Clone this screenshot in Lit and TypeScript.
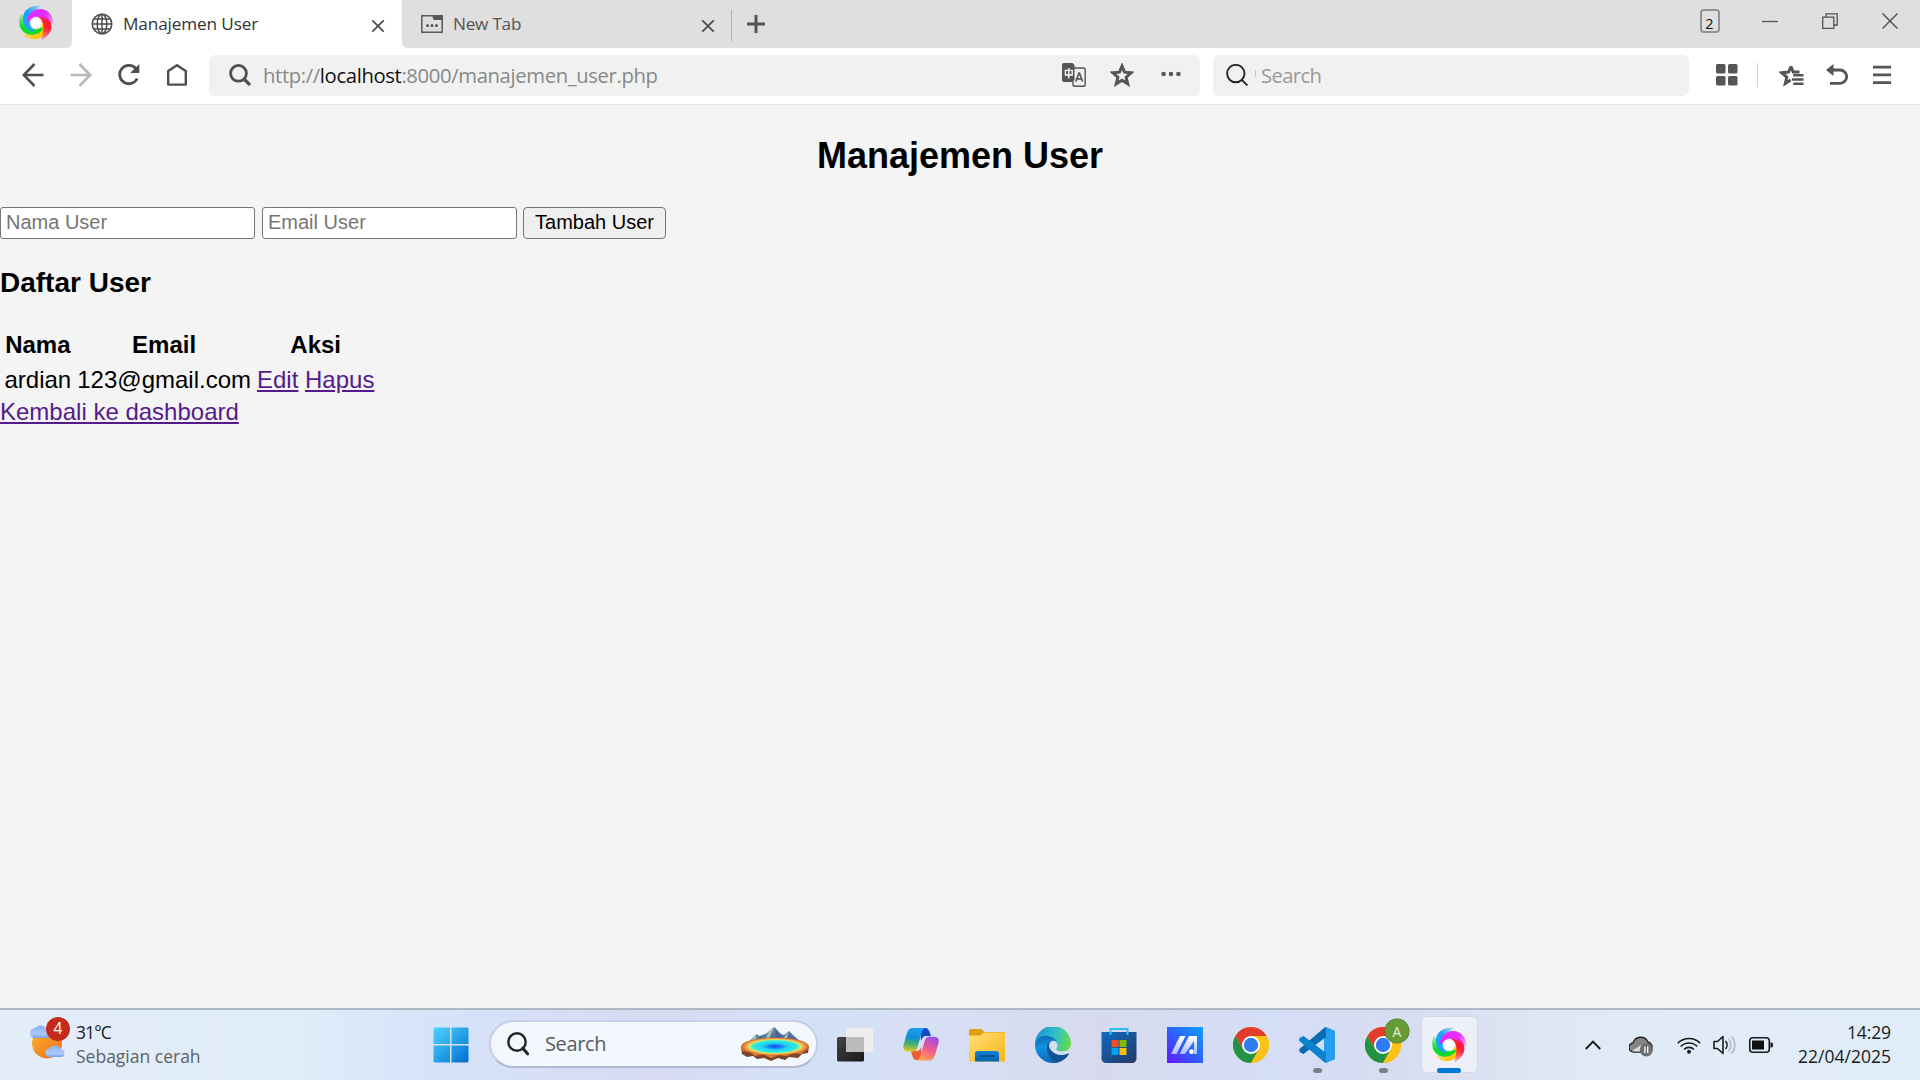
import { LitElement, html, css, svg } from "lit";
import { customElement } from "lit/decorators.js";

const BLADES = [
  { color: "#ffc800", turn: 138 },
  { color: "#0fdc2c", turn: 208 },
  { color: "#1fa2fa", turn: 280 },
  { color: "#ff1a34", turn: 68 },
  { color: "#e52cff", turn: 0 },
];

const swirl = (id: string) => html`<svg width="36" height="36" viewBox="-53 -53 106 106">
  <defs>
    <filter id="b${id}" x="-20%" y="-20%" width="140%" height="140%"><feGaussianBlur stdDeviation="1.5" /></filter>
    <radialGradient id="w${id}"><stop offset=".55" stop-color="#fff" /><stop offset="1" stop-color="#fff" stop-opacity="0" /></radialGradient>
    ${BLADES.map((b, i) => svg`<linearGradient id="g${id}${i}" x1=".1" y1=".2" x2="1" y2=".9">
      <stop offset=".45" stop-color=${b.color} /><stop offset="1" stop-color=${b.color} stop-opacity=".35" /></linearGradient>`)}
  </defs>
  <circle r="25" fill="none" stroke="#f0a0a0" stroke-width="6" />
  <g filter="url(#b${id})">
    ${BLADES.map((b, i) => svg`<path transform="rotate(${b.turn})" fill="url(#g${id}${i})"
      d="M-27 -4C-25 -26 -8 -40 13 -41C34 -41 51 -22 52 4C46 1 40 -5 33 -9C26 -13 20 -16 12 -18C2 -20 -12 -17 -18 -6Z" />`)}
  </g>
  <circle r="21" fill="url(#w${id})" />
</svg>`;

const closeGlyph = html`<svg width="14" height="14" viewBox="0 0 14 14"><path d="M1.3 1.3L12.7 12.7M12.7 1.3L1.3 12.7" stroke="#4c4c4c" stroke-width="1.8" /></svg>`;

const chrome = html`<svg width="36" height="36" viewBox="0 0 36 36">
  <circle cx="18" cy="18" r="18" fill="#fbc116" />
  <path d="M2.4 9A18 18 0 0 1 33.6 9H18L10.2 22.5Z" fill="#e33b2e" />
  <path d="M2.4 9A18 18 0 0 0 18 36L25.8 22.5H10.2Z" fill="#229342" />
  <path d="M33.6 9A18 18 0 0 1 18 36L25.8 22.5L18 9Z" fill="#fbc116" />
  <circle cx="18" cy="18" r="9" fill="#fff" /><circle cx="18" cy="18" r="7.2" fill="#2f7cee" />
</svg>`;

@customElement("browser-tabs")
class BrowserTabs extends LitElement {
  static styles = css`
    :host { display: flex; height: 48px; background: #dfdfdf; font: 17.2px "Open Sans", "Noto Sans", sans-serif; color: #444; }
    svg { display: block; flex: none; }
    .logo { width: 72px; padding: 5px 0 0 18px; box-sizing: border-box; border-bottom-right-radius: 6px; background: #dfdfdf; }
    .under { background: #fff; display: flex; }
    .tab { box-sizing: border-box; width: 330px; height: 48px; display: flex; align-items: center; padding: 0 17px 0 19px; }
    .active { background: #fff; border-radius: 7px 7px 0 0; }
    .idle { width: 329px; border-bottom-left-radius: 6px; background: #dfdfdf; padding-right: 16px; }
    .label { flex: 1; line-height: 48px; height: 48px; padding-left: 10px; }
    .first { color: #333; letter-spacing: -0.14px; }
    .second { color: #555; letter-spacing: -0.25px; }
    .x { padding-top: 3px; }
    .sep { width: 1px; height: 31px; margin-top: 10px; background: #b0b0b0; }
    .plus { margin: 15px 0 0 15px; }
    .win { margin-left: auto; display: flex; align-items: flex-start; }
    .count { box-sizing: border-box; width: 20px; height: 24px; margin: 9px 42.5px 0 0; border: 2px solid #929292; border-radius: 4px; text-align: center; font-size: 14.5px; line-height: 26px; color: #111; }
    .min { margin: 13px 44px 0 0; }
    .max { margin: 13px 44px 0 0; }
    .cls { margin: 13px 22px 0 0; }
  `;
  render() {
    return html`
      <div class="under">
        <div class="logo">${swirl("t")}</div>
        <div class="tab active">
          <svg width="22" height="22" viewBox="0 0 22 22" fill="none" stroke="#4c4c4c" stroke-width="1.5"><circle cx="11" cy="11" r="9.8" /><ellipse cx="11" cy="11" rx="4.8" ry="9.8" /><path d="M11 1V21M1 11H21M2.7 6H19.3M2.7 16H19.3" /></svg>
          <div class="label first">Manajemen User</div><div class="x">${closeGlyph}</div>
        </div>
        <div class="tab idle">
          <svg width="22" height="18" viewBox="0 0 22 18"><path d="M.8 .8H21.2V17.2H.8Z" fill="none" stroke="#585858" stroke-width="1.5" /><path d="M11 0H22V5H12.5Z" fill="#585858" /><g fill="#585858"><circle cx="6.5" cy="10.5" r="1.5" /><circle cx="11" cy="10.5" r="1.5" /><circle cx="15.5" cy="10.5" r="1.5" /></g></svg>
          <div class="label second">New Tab</div><div class="x">${closeGlyph}</div>
        </div>
      </div>
      <div class="sep"></div>
      <svg class="plus" width="18" height="18" viewBox="0 0 18 18"><path d="M9 0V18M0 9H18" stroke="#555" stroke-width="3" /></svg>
      <div class="win">
        <div class="count">2</div>
        <svg class="min" width="16" height="16" viewBox="0 0 16 16"><path d="M0 8.5H16" stroke="#555" stroke-width="1.3" /></svg>
        <svg class="max" width="16" height="16" viewBox="0 0 16 16" fill="none" stroke="#555" stroke-width="1.3"><path d="M.7 4.2H11.8V15.3H.7ZM4 4V.8H15.2V12H12" /></svg>
        <svg class="cls" width="16" height="16" viewBox="0 0 16 16"><path d="M.5 .5L15.5 15.5M15.5 .5L.5 15.5" stroke="#555" stroke-width="1.5" /></svg>
      </div>`;
  }
}

@customElement("browser-toolbar")
class BrowserToolbar extends LitElement {
  static styles = css`
    :host { display: flex; align-items: center; box-sizing: border-box; height: 57px; padding: 0 28px 2px 22px; background: #fff; border-bottom: 1px solid #e4e4e4; font: 20.3px "Open Sans", "Noto Sans", sans-serif; }
    svg { display: block; flex: none; }
    .nav { display: flex; flex: none; gap: 26px; width: 187px; }
    .box { display: flex; flex: none; align-items: center; box-sizing: border-box; height: 41px; background: #f1f1f1; border-radius: 6px; }
    .url { width: 991px; padding: 0 19px 0 20px; }
    .address { flex: 1; padding-left: 12px; color: #888; line-height: 39px; white-space: nowrap; letter-spacing: -0.38px; }
    .host { color: #111; }
    .star { margin: 0 27px 0 24px; }
    .dots { margin-bottom: 2px; }
    .find { width: 476px; margin-left: 13px; padding-left: 13px; color: #999; }
    .caret { width: 1px; height: 7px; margin: 0 5px 3px 7px; background: #c8c8c8; }
    .word { line-height: 39px; letter-spacing: -0.65px; }
    .apps { margin-left: 27px; }
    .sep { width: 1px; height: 24px; margin: 0 21px 0 19px; background: #d0d0d0; }
    .undo { margin: 0 25px 0 22px; }
  `;
  render() {
    return html`
      <div class="nav">
        <svg width="22" height="24" viewBox="0 0 22 24" fill="none" stroke="#4f4f4f" stroke-width="2.6"><path d="M12.5 1L1.8 12L12.5 23M2 12H21.5" /></svg>
        <svg width="22" height="24" viewBox="0 0 22 24" fill="none" stroke="#b9b9b9" stroke-width="2.6"><path d="M9.5 1L20.2 12L9.5 23M20 12H.5" /></svg>
        <svg width="22" height="24" viewBox="0 0 22 24" fill="none" stroke="#4f4f4f" stroke-width="2.8"><path d="M17.6 5.2A9.2 9.2 0 1 0 19.2 15.5" /><path d="M21.3 1V10H12.2Z" fill="#4f4f4f" stroke="none" /></svg>
        <svg width="22" height="24" viewBox="0 0 22 24" fill="none" stroke="#4f4f4f" stroke-width="2.4" stroke-linejoin="round"><path d="M2.2 8L11 2.2L19.8 8V21.6H2.2Z" /></svg>
      </div>
      <div class="box url">
        <svg width="22" height="22" viewBox="0 0 22 22" fill="none" stroke="#4f4f4f" stroke-width="2.8"><circle cx="9.5" cy="9.3" r="7.9" /><path d="M15 15L21 21" stroke-width="3.2" /></svg>
        <div class="address">http://<span class="host">localhost</span>:8000/manajemen_user.php</div>
        <svg width="24" height="24" viewBox="0 0 24 24"><rect x="11" y="5" width="12.2" height="18.2" rx="1.8" fill="#f1f1f1" stroke="#555" stroke-width="1.4" /><path d="M13.8 18.5L17 10H17.4L20.6 18.5M14.8 15.8H19.6" fill="none" stroke="#555" stroke-width="1.7" /><path d="M2 0H10.5L12.5 2V17L9.6 19H2A2 2 0 0 1 0 17V2A2 2 0 0 1 2 0Z" fill="#555" /><path d="M3.4 7.3H10.2V12H3.4ZM6.8 5V15.5" fill="none" stroke="#fff" stroke-width="1.3" /></svg>
        <svg class="star" width="24" height="24" viewBox="0 0 24 24"><path d="M12 3.2L14.5 9.2L21.2 9.8L16.1 14.2L17.7 20.8L12 17.2L6.3 20.8L7.9 14.2L2.8 9.8L9.5 9.2Z" fill="none" stroke="#555" stroke-width="3" /></svg>
        <svg class="dots" width="20" height="6" viewBox="0 0 20 6" fill="#555"><circle cx="2.6" cy="3" r="2.3" /><circle cx="10" cy="3" r="2.3" /><circle cx="17.4" cy="3" r="2.3" /></svg>
      </div>
      <div class="box find">
        <svg width="22" height="22" viewBox="0 0 22 22" fill="none" stroke="#252525" stroke-width="1.9"><circle cx="9.8" cy="9.6" r="8.7" /><path d="M15.8 15.8L21.4 21.4" /></svg>
        <div class="caret"></div><div class="word">Search</div>
      </div>
      <svg class="apps" width="22" height="22" viewBox="0 0 22 22" fill="#555"><rect width="9.5" height="9.5" rx="1.5" /><rect x="12" width="9.5" height="9.5" rx="1.5" /><rect y="12" width="9.5" height="9.5" rx="1.5" /><rect x="12" y="12" width="9.5" height="9.5" rx="1.5" /></svg>
      <div class="sep"></div>
      <svg width="25" height="24" viewBox="0 0 25 24"><path d="M12 3.5L14.2 9H20.5M12 3.5L9.6 9L2.8 9.8L7.8 14L6.3 20.5L11.6 17" fill="none" stroke="#555" stroke-width="3" /><path d="M14.2 12.3H24.5M13 16.5H24.5M14.2 20.7H24.5" stroke="#555" stroke-width="2.4" /></svg>
      <svg class="undo" width="22" height="24" viewBox="0 0 22 24"><path d="M0 7L7.5 1V13Z" fill="#555" /><path d="M5 7H14A6.3 6.3 0 0 1 14 20.3H4" fill="none" stroke="#555" stroke-width="2.8" /></svg>
      <svg width="18" height="20" viewBox="0 0 18 20"><path d="M0 2.2H18M0 9.9H18M0 17.6H18" stroke="#555" stroke-width="2.8" /></svg>`;
  }
}

@customElement("user-page")
class UserPage extends LitElement {
  static styles = css`
    :host { display: block; flex: 1; background: #f4f4f4; color: #000; font: 24px/27px "Liberation Sans", Arial, sans-serif; overflow: hidden; }
    h2 { font-size: 36px; line-height: 41px; text-align: center; margin: 30px 0; }
    h3 { font-size: 28px; line-height: 32px; margin: 28px 0 27px; }
    .form { display: flex; padding-top: 1px; }
    .field { box-sizing: border-box; width: 255px; height: 32px; margin: 0 7px 0 0; padding: 1px 5px 3px; border: 1px solid #767676; border-radius: 3px; background: #fff; font: 20px "Liberation Sans", Arial, sans-serif; }
    .field::placeholder { color: #757575; }
    .add { box-sizing: border-box; width: 143px; height: 32px; margin-left: -1px; padding: 0 0 2px; border: 1px solid #767676; border-radius: 4px; background: #efefef; color: #000; font: 20px "Liberation Sans", Arial, sans-serif; white-space: nowrap; }
    table { border-spacing: 3px; }
    th, td { padding: 2px 1.5px; white-space: nowrap; }
    td { padding-top: 2.5px; }
    a { color: #551a8b; }
  `;
  render() {
    return html`
      <h2>Manajemen User</h2>
      <div class="form"><input class="field" placeholder="Nama User" /><input class="field" placeholder="Email User" /><button class="add">Tambah User</button></div>
      <h3>Daftar User</h3>
      <table>
        <tr><th>Nama</th><th>Email</th><th>Aksi</th></tr>
        <tr><td>ardian</td><td>123@gmail.com</td><td><a href="#">Edit</a> <a href="#">Hapus</a></td></tr>
      </table>
      <a href="#">Kembali ke dashboard</a>`;
  }
}

@customElement("task-bar")
class TaskBar extends LitElement {
  static styles = css`
    :host { display: flex; box-sizing: border-box; height: 72px; border-top: 2px solid #adb8c5; background: linear-gradient(90deg, #e2edf8 0, #e0ecf8 300px, #d6e4fa 430px, #d6def6 560px, #d8dbf2 660px, #d4e0f8 780px, #d7dff4 950px, #d7daee 1100px, #d4def6 1270px, #d8ddf0 1420px, #dfe9f6 1570px, #e1ecf8 1750px, #e0ecf8); font: 17.5px "Open Sans", "Noto Sans", sans-serif; color: #1b1b1b; }
    svg { display: block; flex: none; }
    .weather { display: flex; width: 418px; }
    .sky { position: relative; width: 47px; height: 44px; margin: 7px 0 0 29px; }
    .badge { position: absolute; left: 17px; top: 0; width: 24px; height: 24px; border-radius: 50%; background: #c42b1c; color: #fff; text-align: center; font-size: 15.5px; line-height: 23px; }
    .lines { line-height: 24px; padding-top: 10px; white-space: nowrap; }
    .temp { letter-spacing: -0.9px; }
    .muted { color: #5c6268; }
    .slot { position: relative; width: 66px; height: 70px; display: flex; align-items: center; justify-content: center; padding-bottom: 1px; box-sizing: border-box; }
    .search { box-sizing: border-box; display: flex; align-items: center; width: 329px; height: 48px; margin: 10px 4px 0 5px; padding: 0 6px 0 16px; border: 2px solid #c4cfe6; border-bottom-color: #b0bacf; border-radius: 24px; background: #f3f7fe; color: #575b62; font-size: 20px; }
    .search .word { flex: 1; padding-left: 16px; line-height: 44px; letter-spacing: -0.35px; }
    .pill { position: absolute; bottom: 7px; left: 28.5px; width: 9px; height: 5px; border-radius: 3px; background: #7c8089; }
    .on { left: 21px; width: 24px; background: #0078d4; }
    .card { width: 57px; height: 57px; box-sizing: border-box; display: flex; align-items: center; justify-content: center; border: 1px solid #d4d8e4; border-radius: 6px; background: #edf0f9; }
    .profile { position: absolute; left: 35px; top: 9px; width: 24px; height: 24px; border-radius: 50%; background: #659c35; box-shadow: 0 0 0 .5px #41721f; color: #e3eedb; text-align: center; font: 14px/25px "Open Sans", sans-serif; }
    .tray { margin-left: auto; display: flex; align-items: center; height: 69px; }
    .cloud { margin: 2px 24px 0 28px; }
    .sound { margin: 0 12px; }
    .clock { width: 118px; margin-right: 29px; padding-top: 10px; align-self: flex-start; text-align: right; line-height: 24px; }
    .time { letter-spacing: -0.1px; }
  `;
  render() {
    return html`
      <div class="weather">
        <div class="sky">
          <svg width="38" height="44" viewBox="0 0 38 44">
            <defs><linearGradient id="sun" x1="0" y1="0" x2="1" y2="1"><stop offset="0" stop-color="#f8b62d" /><stop offset="1" stop-color="#f26a1b" /></linearGradient>
            <linearGradient id="cl" x1="0" y1="0" x2="0" y2="1"><stop offset="0" stop-color="#8ab4f6" /><stop offset=".7" stop-color="#abc8fa" /><stop offset="1" stop-color="#739ce8" /></linearGradient></defs>
            <circle cx="18" cy="26.500" r="15" fill="url(#sun)" />
            <path d="M5 21A5 5 0 0 1 3 12A4 4 0 0 1 6 11A7 7 0 0 1 17 11L22 21Z" fill="url(#cl)" />
            <path d="M19 40A5 5 0 0 1 17 33A4 4 0 0 1 20 32A7 7 0 0 1 32 32A4.200 4.200 0 0 1 33 40Z" fill="url(#cl)" />
          </svg>
          <div class="badge">4</div>
        </div>
        <div class="lines"><div class="temp">31°C</div><div class="muted">Sebagian cerah</div></div>
      </div>
      <div class="slot">
        <svg width="36" height="36" viewBox="0 0 36 36"><defs><linearGradient id="win" x1="0" y1="0" x2="1" y2="1"><stop offset="0" stop-color="#4fd4ff" /><stop offset="1" stop-color="#006fd0" /></linearGradient></defs><path fill="url(#win)" d="M1.5 .5H17V17H.5V1.5ZM18.5 .5H34.5L35.5 1.5V17H18.5ZM.5 18.5H17V35.5H1.5L.5 34.5ZM18.5 18.5H35.5V34.5L34.5 35.5H18.5Z" /></svg>
      </div>
      <div class="search">
        <svg width="22" height="24" viewBox="0 0 22 24" fill="none" stroke="#242424" stroke-width="2.4"><circle cx="10" cy="10" r="8.7" /><path d="M15.8 16.2L20.6 21.8" stroke-width="3" stroke-linecap="round" /></svg>
        <div class="word">Search</div>
        <svg width="70" height="36" viewBox="0 0 70 36">
          <defs><radialGradient id="pool"><stop offset="0" stop-color="#1845e8" /><stop offset=".2" stop-color="#1884fa" /><stop offset=".36" stop-color="#20d0f4" /><stop offset=".64" stop-color="#30eae0" /><stop offset=".76" stop-color="#d7e66b" /><stop offset=".86" stop-color="#f9a13a" /><stop offset="1" stop-color="#c9602c" /></radialGradient>
          <linearGradient id="mt" x1="0" y1="0" x2="1" y2="1"><stop offset="0" stop-color="#86b5a0" /><stop offset=".5" stop-color="#527994" /><stop offset="1" stop-color="#5265b4" /></linearGradient></defs>
          <path d="M9 16L16 8L20 10L27 7L34 1L41 8L44 9L49 5L54 10L61 16Z" fill="url(#mt)" />
          <path d="M34 1L29 13L25 15L28 7ZM49 5L46 15H41ZM16 8L16 15H11Z" fill="#bad2be" opacity=".8" /><path d="M35 1L41 10L43 15L36 12ZM20 9L26 15H20Z" fill="#4b55a6" opacity=".7" />
          <path d="M1 20L2 28L7 31L13 30L17 33L24 32L31 35L38 32L45 34L49 31L58 32L62 28L68 27L69 20Z" fill="#7d462c" />
          <path d="M1 20L3 25L10 26L15 30L23 28L31 32L39 29L47 30L53 27L61 28L69 21Z" fill="#e27d35" />
          <ellipse cx="35" cy="20.500" rx="34" ry="9" fill="url(#pool)" />
        </svg>
      </div>
      <div class="slot">
        <svg width="36" height="36" viewBox="0 0 36 36"><defs><linearGradient id="tv" x1="0" y1="0" x2="1" y2="1"><stop offset="0" stop-color="#454545" /><stop offset="1" stop-color="#181818" /></linearGradient></defs><rect y="10" width="27" height="24.5" rx="1.5" fill="url(#tv)" /><rect x="9" y="1" width="27" height="24" rx="1" fill="#eee" /><rect x="9" y="10" width="18" height="15" fill="#bcbcbc" /></svg>
      </div>
      <div class="slot">
        <svg width="36" height="36" viewBox="0 0 36 36">
          <defs><linearGradient id="cp1" x1=".3" y1="0" x2=".2" y2="1"><stop offset="0" stop-color="#1c9cf0" /><stop offset=".4" stop-color="#118fd0" /><stop offset=".7" stop-color="#54b267" /><stop offset="1" stop-color="#f2cb16" /></linearGradient>
          <linearGradient id="cp2" x1=".6" y1="0" x2=".3" y2="1"><stop offset="0" stop-color="#a14bea" /><stop offset=".5" stop-color="#ef5a8d" /><stop offset="1" stop-color="#fda354" /></linearGradient></defs>
          <path d="M17 1H22C25 1 26 3 27 6L28 9H23C20 9 19 11 18 14Z" fill="#1448c9" />
          <path d="M19 33H14C11 33 10 31 9 28L8 24H13C16 24 17 23 18 20Z" fill="#ef5d38" />
          <path d="M10 1H22C19.5 2 19 5 18 8L14.5 20C13.5 23 12 24.500 9 24.500H5C1 24.500 -.5 22 .6 17.500L4 6C5 2.500 7 1 10 1Z" fill="url(#cp1)" />
          <path d="M26 33.500H14C16.500 32 17 30 18 27L21.500 14.500C22.500 11 24 9.700 27 9.700H31C35 9.700 36.500 12 35.400 16.500L32 28C31 31.500 29 33.500 26 33.500Z" fill="url(#cp2)" />
        </svg>
      </div>
      <div class="slot">
        <svg width="36" height="36" viewBox="0 0 36 36"><defs><linearGradient id="fd" x1="0" y1="0" x2="1" y2="1"><stop offset="0" stop-color="#ffdf7a" /><stop offset="1" stop-color="#f9b515" /></linearGradient><linearGradient id="fb" x1="0" y1="0" x2="0" y2="1"><stop offset="0" stop-color="#0d80d8" /><stop offset="1" stop-color="#0a62ae" /></linearGradient></defs><path d="M0 3L1 2H12L15.500 5H35L36 6V14H0Z" fill="#dfa00c" /><path d="M0 8.500H11L15 5.500H35L36 6.500V34.500H0Z" fill="url(#fd)" /><path d="M6 34.500V27A3 3 0 0 1 9 24H27A3 3 0 0 1 30 27V34.500Z" fill="url(#fb)" /><path d="M10.500 29H25.500" stroke="#084989" stroke-width="1.700" /></svg>
      </div>
      <div class="slot">
        <svg width="36" height="36" viewBox="0 0 36 36">
          <defs><linearGradient id="eg" x1="0" y1=".3" x2="1" y2=".5"><stop offset="0" stop-color="#1794d8" /><stop offset=".55" stop-color="#2fc0c8" /><stop offset="1" stop-color="#66da4c" /></linearGradient>
          <linearGradient id="eb" x1=".3" y1="0" x2=".5" y2="1"><stop offset="0" stop-color="#1268b4" /><stop offset=".4" stop-color="#1193df" /><stop offset="1" stop-color="#0c63b8" /></linearGradient></defs>
          <path d="M0 18A18 18 0 0 1 36 16C36 21 32.500 24.500 27 24.500C23 24.500 20.500 23 21.500 21.500C24 17 21 12 14 10C7 8.500 1 12 0 18Z" fill="url(#eg)" />
          <path d="M0 18C1 11 7 8.200 13 9C18 9.700 22 13 22.500 17C17 12 12 18 14 24C16 30 23 32 30 30C27 34 22.500 36 18 36A18 18 0 0 1 0 18Z" fill="url(#eb)" />
          <path d="M13.500 15C10 22 13 30 20 35.700C26 35.500 31 32 33.600 27.500C34 26.500 33 26 32 26.700C25 30 18 27 14.500 21Z" fill="#11529a" />
          <path d="M14.500 17C15.500 13.500 20 12.500 22 16C23 18.500 21 21 21 22C21.500 24 25 25 28 24.500C31 24.200 33 23.500 34 22.500L33.500 26C27 29.500 17 26 14.500 19.500Z" fill="#d6dff0" />
        </svg>
      </div>
      <div class="slot">
        <svg width="36" height="36" viewBox="0 0 36 36"><defs><linearGradient id="st" x1="0" y1="0" x2=".8" y2="1"><stop offset="0" stop-color="#0c6cbf" /><stop offset="1" stop-color="#233e70" /></linearGradient></defs><path d="M.5 5H35.500V31.500A4.500 4.500 0 0 1 31 36H5A4.500 4.500 0 0 1 .5 31.500Z" fill="url(#st)" /><path d="M9.500 8V2H26.500V8" fill="none" stroke="#2cc1f4" stroke-width="2" /><path d="M10.500 13H17.500V20H10.500Z" fill="#f25022" /><path d="M18.500 13H25.500V20H18.500Z" fill="#7fba00" /><path d="M10.500 21H17.500V28H10.500Z" fill="#00a4ef" /><path d="M18.500 21H25.500V28H18.500Z" fill="#ffb900" /></svg>
      </div>
      <div class="slot">
        <svg width="36" height="36" viewBox="0 0 36 36"><defs><linearGradient id="ma" x1="0" y1="1" x2="1" y2="0"><stop offset="0" stop-color="#6418ff" /><stop offset=".5" stop-color="#2e60ff" /><stop offset="1" stop-color="#0ba2ff" /></linearGradient><linearGradient id="mw" x1="0" y1="0" x2="0" y2="1"><stop offset="0" stop-color="#fff" /><stop offset="1" stop-color="#a8bcff" /></linearGradient></defs><rect width="36" height="36" fill="url(#ma)" /><path d="M13 9H18.500L9.500 27H4ZM22 9H30V27H27V14L18 27H12.500Z" fill="url(#mw)" /><circle cx="24.500" cy="24.700" r="2.400" fill="#fff" /></svg>
      </div>
      <div class="slot">${chrome}</div>
      <div class="slot">
        <svg width="36" height="36" viewBox="0 0 36 36"><path d="M27 0L36 4V32L27 36L25 34V2Z" fill="#26a0ee" /><path d="M27 0V10L4.500 27L1.500 25.500C-.3 24 -.3 23 1 21.500L25 1Z" fill="#0a6cb2" /><path d="M27 36V26L4.500 9L1.500 10.500C-.3 12 -.3 13 1 14.500L25 35Z" fill="#0b82cd" /><path d="M27 0L36 4V32L27 36Z" fill="#26a0ee" /></svg>
        <div class="pill"></div>
      </div>
      <div class="slot">${chrome}<div class="profile">A</div><div class="pill"></div></div>
      <div class="slot"><div class="card">${swirl("b")}</div><div class="pill on"></div></div>
      <div class="tray">
        <svg width="16" height="10" viewBox="0 0 16 10"><path d="M.8 9L8 1.500L15.200 9" fill="none" stroke="#1b1b1b" stroke-width="1.900" /></svg>
        <svg class="cloud" width="24" height="22" viewBox="0 0 24 22"><path d="M5 17A4.500 4.500 0 0 1 4 8A8 8 0 0 1 19 7A5 5 0 0 1 22 15L15 17Z" fill="#858585" stroke="#222" stroke-width="1.300" /><path d="M3 16L12 10L17 16.500H6Z" fill="#ddd" /><circle cx="17.300" cy="14.800" r="6.600" fill="#707070" /><path d="M15.900 11.500V18M18.700 11.500V18" stroke="#fff" stroke-width="1.300" /></svg>
        <svg width="24" height="18" viewBox="0 0 24 18" fill="none" stroke="#1b1b1b" stroke-width="1.600"><path d="M.7 7.300A15.800 15.800 0 0 1 23.300 7.300M3.700 10.500A11.500 11.500 0 0 1 20.300 10.500M7 13.500A7 7 0 0 1 17 13.500" /><circle cx="12" cy="15.700" r="2" fill="#1b1b1b" stroke="none" /></svg>
        <svg class="sound" width="24" height="20" viewBox="0 0 24 20" fill="none" stroke="#1b1b1b" stroke-width="1.600"><path d="M1 6.500H4.500L10 1.500V18.500L4.500 13.500H1Z" stroke-linejoin="round" /><path d="M12.500 6A6 6 0 0 1 12.500 14" /><g stroke="#b3bcc5"><path d="M15.500 4A9 9 0 0 1 15.500 16M18.500 1.500A12.500 12.500 0 0 1 18.500 18.500" /></g></svg>
        <svg width="24" height="16" viewBox="0 0 24 16"><rect x=".8" y=".8" width="19.500" height="14.400" rx="3" fill="none" stroke="#1b1b1b" stroke-width="1.600" /><rect x="3" y="3.500" width="12" height="9" fill="#111" /><path d="M21.500 5L24 6.500V9.500L21.500 11Z" fill="#1b1b1b" /></svg>
        <div class="clock"><div class="time">14:29</div><div>22/04/2025</div></div>
      </div>`;
  }
}

@customElement("app-root")
class AppRoot extends LitElement {
  static styles = css`
    :host { display: flex; flex-direction: column; width: 1920px; height: 1080px; overflow: hidden; }
  `;
  render() {
    return html`<browser-tabs></browser-tabs><browser-toolbar></browser-toolbar><user-page></user-page><task-bar></task-bar>`;
  }
}
